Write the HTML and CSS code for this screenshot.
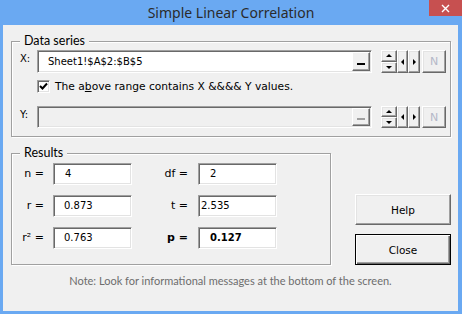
FILE: index.html
```html
<!DOCTYPE html>
<html lang="en">
<head>
    <meta charset="UTF-8">
    <title>Simple Linear Correlation</title>
    <link rel="stylesheet" href="styles.css">
</head>
<body>
    <div class="window">
        <div class="titlebar">
            <span></span>
            <span class="title">Simple Linear Correlation</span>
            <span class="close-btn">
                <svg width="9" height="9" viewBox="0 0 9 9"><path d="M1 1L8 8M8 1L1 8" stroke="#fff" stroke-width="1.4"/></svg>
            </span>
        </div>

        <div class="client">
            <div class="group data-group">
                <span class="group-title">Data series</span>

                <div class="ref-row">
                    <span class="ref-label">X:</span>
                    <div class="ref-input">
                        <span class="ref-text">Sheet1!$A$2:$B$5</span>
                        <span class="pick-btn"><i></i></span>
                    </div>
                    <div class="spinner">
                        <div class="updown">
                            <span class="btn3d"><i class="tri up"></i></span>
                            <span class="btn3d"><i class="tri down"></i></span>
                        </div>
                        <span class="btn3d arrow-btn"><i class="tri left"></i></span>
                        <span class="btn3d arrow-btn"><i class="tri right"></i></span>
                        <span class="btn3d n-btn">N</span>
                    </div>
                </div>

                <label class="check-row">
                    <span class="checkbox">
                        <svg width="9" height="9" viewBox="0 0 9 9"><path d="M1 4L3.5 6.5L8 1.5" fill="none" stroke="#000" stroke-width="2"/></svg>
                    </span>
                    <span>The a<u>b</u>ove range contains X &amp;&amp;&amp;&amp; Y values.</span>
                </label>

                <div class="ref-row disabled">
                    <span class="ref-label">Y:</span>
                    <div class="ref-input">
                        <span class="ref-text"></span>
                        <span class="pick-btn"><i></i></span>
                    </div>
                    <div class="spinner">
                        <div class="updown">
                            <span class="btn3d"><i class="tri up"></i></span>
                            <span class="btn3d"><i class="tri down"></i></span>
                        </div>
                        <span class="btn3d arrow-btn"><i class="tri left"></i></span>
                        <span class="btn3d arrow-btn"><i class="tri right"></i></span>
                        <span class="btn3d n-btn">N</span>
                    </div>
                </div>
            </div>

            <div class="results-row">
                <div class="group results-group">
                    <span class="group-title">Results</span>
                    <div class="stats">
                        <span class="stat-label">n =</span>
                        <span class="stat-box pad-wide">4</span>
                        <span class="stat-label">df =</span>
                        <span class="stat-box pad-wide">2</span>

                        <span class="stat-label">r =</span>
                        <span class="stat-box">0.873</span>
                        <span class="stat-label">t =</span>
                        <span class="stat-box pad-narrow">2.535</span>

                        <span class="stat-label">r² =</span>
                        <span class="stat-box">0.763</span>
                        <span class="stat-label bold">p =</span>
                        <span class="stat-box bold pad-wide">0.127</span>
                    </div>
                </div>

                <div class="actions">
                    <button class="btn3d push-btn">Help</button>
                    <button class="btn3d push-btn default">Close</button>
                </div>
            </div>

            <p class="note">Note: Look for informational messages at the bottom of the screen.</p>
        </div>
    </div>
</body>
</html>
```

FILE: styles.css
```css
:root {
    --frame: #6aa9f2;
    --face: #f0f0f0;
    --shadow: #a0a0a0;
    --dark-shadow: #696969;
    --ui-font: 'Lato', 'Noto Sans', sans-serif;
    --ctl-font: 'DejaVu Sans', sans-serif;
}

body {
    margin: 0;
    font-family: var(--ui-font);
    color: #000;
}

.window {
    width: 462px;
    height: 314px;
    box-sizing: border-box;
    padding: 0 4px 3px 3px;
    background-color: var(--frame);
    display: flex;
    flex-direction: column;
}

.titlebar {
    height: 25px;
    flex: none;
    display: grid;
    grid-template-columns: 1fr auto 1fr;
    margin: 0 -4px 0 -3px;
}

.title {
    font-family: 'Noto Sans', sans-serif;
    font-size: 14px;
    line-height: 25px;
    color: #2b2b2b;
}

.close-btn {
    justify-self: end;
    width: 33px;
    height: 16px;
    background-color: #c75050;
    display: flex;
    align-items: center;
    justify-content: center;
}

.client {
    flex: 1;
    background-color: var(--face);
    display: flex;
    flex-direction: column;
}

/* group boxes */
.group {
    position: relative;
    border: 1px solid var(--shadow);
    box-shadow: 1px 1px 0 #fff, inset 1px 1px 0 #fff;
}

.group-title {
    position: absolute;
    top: -9px;
    left: 8px;
    padding: 0 4px;
    background-color: var(--face);
    font-size: 12.5px;
    line-height: 16px;
}

.data-group {
    margin: 16px 7px 0 8px;
    padding: 8px 0 8px 8px;
}

/* 3d bevels */
.btn3d {
    box-sizing: border-box;
    background-color: var(--face);
    border: 1px solid;
    border-color: #fff var(--dark-shadow) var(--dark-shadow) #fff;
    box-shadow: inset -1px -1px 0 var(--shadow), inset 1px 1px 0 #e3e3e3;
    display: flex;
    align-items: center;
    justify-content: center;
}

.ref-row {
    display: flex;
    height: 23px;
}

.ref-row.disabled {
    height: 22px;
}

.ref-label {
    width: 17px;
    font-family: var(--ctl-font);
    font-size: 10px;
    line-height: 17px;
    color: #000;
}

.ref-input {
    width: 335px;
    box-sizing: border-box;
    border: 1px solid;
    border-color: var(--shadow) #fff #fff var(--shadow);
    box-shadow: inset 1px 1px 0 var(--dark-shadow), inset -1px -1px 0 #e3e3e3;
    background-color: #fff;
    display: flex;
    align-items: center;
    padding: 0 1px 0 10px;
}

.ref-text {
    flex: 1;
    font-family: var(--ctl-font);
    font-size: 10px;
}

.pick-btn {
    width: 18px;
    height: 19px;
    box-sizing: border-box;
    border: 1px solid;
    border-color: #fff var(--dark-shadow) var(--dark-shadow) #fff;
    box-shadow: inset -1px -1px 0 var(--shadow);
    background-color: var(--face);
    display: flex;
    align-items: flex-end;
    justify-content: center;
    padding-bottom: 5px;
}

.disabled .pick-btn {
    height: 18px;
}

.pick-btn i {
    width: 8px;
    height: 2px;
    background-color: #000;
}

.spinner {
    display: flex;
    margin-left: 9px;
}

.updown {
    display: flex;
    flex-direction: column;
    width: 16px;
}

.updown .btn3d {
    flex: 1;
}

.arrow-btn {
    width: 11px;
}

.arrow-btn + .arrow-btn {
    width: 12px;
}

.n-btn {
    width: 24px;
    margin-left: 2px;
    font-family: var(--ctl-font);
    font-size: 11px;
    color: #b4b8c8;
}

.tri {
    width: 0;
    height: 0;
    border: 3px solid transparent;
}

.tri.up { border-bottom-color: #000; border-top-width: 0; }
.tri.down { border-top-color: #000; border-bottom-width: 0; }
.tri.left { border-right-color: #000; border-left-width: 0; }
.tri.right { border-left-color: #000; border-right-width: 0; }

.check-row {
    display: flex;
    align-items: center;
    gap: 5px;
    margin: 7px 0 13px 17px;
    font-family: var(--ctl-font);
    font-size: 10.7px;
    line-height: 13px;
}

.checkbox {
    width: 13px;
    height: 13px;
    box-sizing: border-box;
    border: 1px solid;
    border-color: var(--shadow) #fff #fff var(--shadow);
    box-shadow: inset 1px 1px 0 var(--dark-shadow), inset -1px -1px 0 #e3e3e3;
    background-color: #fff;
    display: flex;
    align-items: center;
    justify-content: center;
}

.disabled .ref-input {
    background-color: var(--face);
}

.disabled .pick-btn i {
    background-color: var(--shadow);
}

/* results */
.results-row {
    display: flex;
    align-items: flex-end;
    margin: 16px 0 0 8px;
}

.results-group {
    width: 320px;
    box-sizing: border-box;
    padding: 9px 0 15px 0;
}

.stats {
    display: grid;
    grid-template-columns: 41px 79px 66px 79px;
    grid-auto-rows: 22px;
    row-gap: 10px;
}

.stat-label {
    text-align: right;
    padding-right: 9px;
    font-family: var(--ctl-font);
    font-size: 11px;
    line-height: 22px;
}

.stat-label:nth-child(4n+3) {
    padding-right: 10px;
}

.stat-box {
    box-sizing: border-box;
    border: 1px solid;
    border-color: var(--shadow) #fff #fff var(--shadow);
    box-shadow: inset 1px 1px 0 var(--dark-shadow), inset -1px -1px 0 #e3e3e3;
    background-color: #fff;
    padding-left: 10px;
    font-family: var(--ctl-font);
    font-size: 10px;
    line-height: 20px;
}

.stat-box.pad-wide { padding-left: 11px; }
.stat-box.pad-narrow { padding-left: 2px; }

.bold {
    font-weight: bold;
}

.actions {
    display: flex;
    flex-direction: column;
    gap: 9px;
    margin-left: 24px;
}

.push-btn {
    width: 96px;
    height: 31px;
    font-family: var(--ctl-font);
    font-size: 10.5px;
    color: #000;
}

.push-btn.default {
    border-color: #000;
    box-shadow: inset 1px 1px 0 #fff, inset -1px -1px 0 var(--dark-shadow), inset -2px -2px 0 var(--shadow);
}

.note {
    margin: 8px 0 0;
    text-align: center;
    font-size: 11px;
    line-height: 16px;
    color: #6d6d6d;
}
```
